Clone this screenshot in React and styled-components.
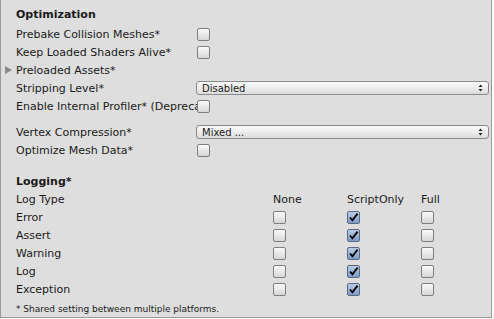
import React from "react";
import styled, { createGlobalStyle, css } from "styled-components";

const Global = createGlobalStyle`
  html, body { margin: 0; padding: 0; background: #ffffff; }
  body { font-family: "DejaVu Sans", "Liberation Sans", sans-serif; }
`;

const Panel = styled.div`
  width: 492px;
  height: 318px;
  box-sizing: border-box;
  background: #dedede;
  border-left: 1px solid #9a9a9a;
  border-right: 1px solid #9a9a9a;
  border-bottom: 1px solid #9a9a9a;
  padding: 4px 0 0 4px;
  color: #1a1a1a;
  font-size: 11px;
  display: flex;
  flex-direction: column;
`;

const Row = styled.div`
  display: flex;
  align-items: center;
  height: 18px;
  margin-top: ${(p) => p.$gap || 0}px;
`;

const Gutter = styled.div`
  width: 11px;
  flex: none;
  display: flex;
  align-items: center;
`;

const Label = styled.div`
  width: 181px;
  flex: none;
  white-space: nowrap;
  overflow: hidden;
`;

const Title = styled.div`
  font-weight: bold;
  white-space: nowrap;
`;

const Box = styled.div`
  width: 11px;
  height: 11px;
  flex: none;
  border: 1px solid #7e7e7e;
  border-radius: 2px;
  display: flex;
  align-items: center;
  justify-content: center;
  ${(p) =>
    p.$on
      ? css`
          background: linear-gradient(#b9cbe6, #7d9cc9);
          border-color: #5a6a80;
        `
      : css`
          background: linear-gradient(#fafafa, #d6d6d6);
        `}
`;

const Check = ({ on }) => (
  <Box $on={on}>
    {on && (
      <svg width="11" height="11" viewBox="0 0 11 11">
        <path d="M2 5.5 L4.4 8.3 L9.6 1.6" fill="none" stroke="#000" strokeWidth="1.9" />
      </svg>
    )}
  </Box>
);

const Select = styled.div`
  width: 281px;
  height: 12px;
  box-sizing: content-box;
  border: 1px solid #8a8a8a;
  border-radius: 3px;
  background: linear-gradient(#fbfbfb, #dcdcdc);
  display: flex;
  align-items: center;
  justify-content: space-between;
  padding: 0 5px;
  margin-left: -1px;
  font-size: 10px;
`;

const Dropdown = ({ value }) => (
  <Select>
    <span>{value}</span>
    <svg width="5" height="8" viewBox="0 0 5 8">
      <path d="M2.5 0.5 L4.5 3 L0.5 3 Z M2.5 7.5 L4.5 5 L0.5 5 Z" fill="#222" />
    </svg>
  </Select>
);

const Tri = styled.div`
  width: 0;
  height: 0;
  border-top: 4.5px solid transparent;
  border-bottom: 4.5px solid transparent;
  border-left: 7px solid #8a8a8a;
`;

const Grid = styled.div`
  display: grid;
  grid-template-columns: 257px 74px 74px 74px;
  grid-auto-rows: 18px;
  align-items: center;
  margin-left: 11px;
`;

const Cell = styled.div`
  white-space: nowrap;
`;

const Foot = styled.div`
  margin-left: 11px;
  margin-top: 3px;
  font-size: 9px;
  height: 16px;
  display: flex;
  align-items: center;
`;

const opts = [
  ["Prebake Collision Meshes*", "check"],
  ["Keep Loaded Shaders Alive*", "check"],
  ["Preloaded Assets*", "fold"],
  ["Stripping Level*", "Disabled"],
  ["Enable Internal Profiler* (Deprecated)", "check"],
];

const logs = ["Error", "Assert", "Warning", "Log", "Exception"];

export default function App() {
  return (
    <>
      <Global />
      <Panel>
        <Row $gap={1}>
          <Gutter />
          <Title>Optimization</Title>
        </Row>
        {opts.map(([l, c], i) => (
          <Row key={l} $gap={i === 0 ? 2 : 0}>
            <Gutter>{c === "fold" && <Tri />}</Gutter>
            <Label>{l}</Label>
            {c === "check" && <Check />}
            {c === "Disabled" && <Dropdown value="Disabled" />}
          </Row>
        ))}
        <Row $gap={8}>
          <Gutter />
          <Label>Vertex Compression*</Label>
          <Dropdown value="Mixed ..." />
        </Row>
        <Row>
          <Gutter />
          <Label>Optimize Mesh Data*</Label>
          <Check />
        </Row>
        <Row $gap={13}>
          <Gutter />
          <Title>Logging*</Title>
        </Row>
        <Grid>
          <Cell>Log Type</Cell>
          <Cell>None</Cell>
          <Cell>ScriptOnly</Cell>
          <Cell>Full</Cell>
          {logs.map((l) => (
            <React.Fragment key={l}>
              <Cell>{l}</Cell>
              <Check />
              <Check on />
              <Check />
            </React.Fragment>
          ))}
        </Grid>
        <Foot>* Shared setting between multiple platforms.</Foot>
      </Panel>
    </>
  );
}
